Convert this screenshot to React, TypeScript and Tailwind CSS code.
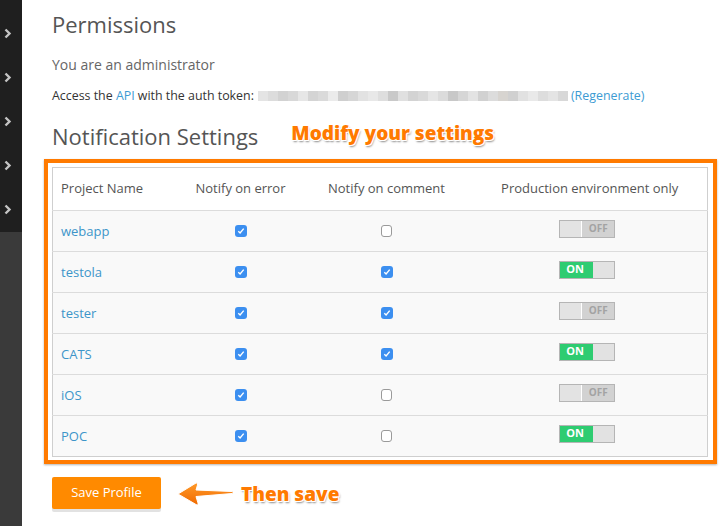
import React from "react";

const projects = [
  { name: "webapp", error: true, comment: false, prod: false },
  { name: "testola", error: true, comment: true, prod: true },
  { name: "tester", error: true, comment: true, prod: false },
  { name: "CATS", error: true, comment: true, prod: true },
  { name: "iOS", error: true, comment: false, prod: false },
  { name: "POC", error: true, comment: false, prod: true },
];

const tokenShades = [
  "#e4e4e4", "#dcdcdc", "#d2d2d2", "#d8d8d8", "#e6e6e6", "#d4d4d4", "#dadada", "#ebebeb",
  "#cfcfcf", "#d6d6d6", "#e2e2e2", "#e8e8e8", "#dedede", "#c9c9c9", "#e0e0e0", "#d3d3d3",
  "#d9d9d9", "#e5e5e5", "#dbdbdb", "#c8c8c8", "#d6d6d6", "#e3e3e3", "#d1d1d1", "#dcdcdc",
  "#d7d4d0", "#d0d0d0", "#e1e1e1", "#e9e9e9", "#dddddd", "#e4e4e4", "#d8d8d8",
];

const Chevron = () => (
  <svg width="8" height="11" viewBox="0 0 8 11">
    <path d="M1.5 1.5 L5.5 5.5 L1.5 9.5" fill="none" stroke="#c4c4c4" strokeWidth="2.4" />
  </svg>
);

const Checkbox = ({ checked }: { checked: boolean }) =>
  checked ? (
    <span className="inline-flex h-[12px] w-[12px] items-center justify-center rounded-[3px] bg-[#3c8ff0]">
      <svg width="8" height="8" viewBox="0 0 8 8">
        <path d="M1.3 4.2 L3.1 6 L6.7 1.6" fill="none" stroke="#fff" strokeWidth="1.4" />
      </svg>
    </span>
  ) : (
    <span className="inline-block h-[12px] w-[11px] rounded-[3px] border border-[#9a9a9a] bg-white" />
  );

const Toggle = ({ on }: { on: boolean }) =>
  on ? (
    <div className="flex h-[18px] w-[56px] border border-[#b5b5b5]">
      <div className="flex w-[33px] items-center bg-[#2ecc71] pl-[6px] text-[11px] font-bold text-white">ON</div>
      <div className="flex-1 bg-[#e2e2e2]" />
    </div>
  ) : (
    <div className="flex h-[18px] w-[56px] border border-[#b5b5b5] bg-[#d2d2d2]">
      <div className="w-[22px] border-r border-white bg-[#e3e3e3]" />
      <div className="flex flex-1 items-center justify-center text-[10px] font-bold text-[#a3a3a3]">OFF</div>
    </div>
  );

const Arrow = () => (
  <svg width="58" height="26" viewBox="0 0 58 26">
    <defs>
      <linearGradient id="ag" x1="0" y1="0" x2="0" y2="1">
        <stop offset="0" stopColor="#ff9a2a" />
        <stop offset="1" stopColor="#f06a00" />
      </linearGradient>
    </defs>
    <path
      d="M1 13 L19 2 Q21 1 20.5 4 L19 9 L55 10.5 Q57 11.5 55 12.5 L19 15.5 L21 22 Q21.5 25 19 23.5 Z"
      fill="url(#ag)"
      stroke="#fff"
      strokeWidth="1"
      strokeLinejoin="round"
    />
  </svg>
);

const annot =
  "font-['Open_Sans',sans-serif] font-extrabold text-[#ff7a00] [text-shadow:-1px_-1px_0_#fff,1px_-1px_0_#fff,-1px_1px_0_#fff,1px_1px_0_#fff,1px_2px_2px_rgba(0,0,0,0.45)]";

export default function App() {
  return (
    <div className="flex h-[526px] w-[725px] overflow-hidden bg-white font-['Open_Sans',sans-serif]">
      <div className="flex w-[22px] flex-col bg-[#3a3a3a]">
        <div className="flex flex-col bg-[#1f1f1f] pt-[11px] pb-[1px]">
          {[0, 1, 2, 3, 4].map((i) => (
            <div key={i} className="flex h-[44px] items-center pl-[4px]">
              <Chevron />
            </div>
          ))}
        </div>
      </div>

      <div className="flex flex-col pl-[30px]">
        <h1 className="mt-[9px] text-[22px] leading-[30px] text-[#555]">Permissions</h1>
        <p className="mt-[16px] text-[14px] leading-[20px] text-[#666]">You are an administrator</p>
        <div className="mt-[13px] flex items-center text-[12.4px] leading-[16px] text-[#333]">
          <span>
            Access the <span className="text-[#3d9bd3]">API</span> with the auth token:
          </span>
          <div className="ml-[4px] flex h-[10px]">
            {tokenShades.map((c, i) => (
              <div key={i} className="h-full w-[10px]" style={{ background: c }} />
            ))}
          </div>
          <span className="ml-[3px] text-[#3d9bd3]">(Regenerate)</span>
        </div>

        <div className="mt-[17px] flex items-center">
          <h2 className="text-[22px] leading-[30px] text-[#555]">Notification Settings</h2>
          <span className={`ml-[33px] -mt-[6px] text-[19px] leading-[24px] ${annot}`}>Modify your settings</span>
        </div>

        <div className="-ml-[8px] mt-[8px] w-[673px] border-4 border-[#ff7a00] pt-[4px] pr-[6px] pb-[3px] pl-[4px] shadow-[0_1px_2px_rgba(0,0,0,0.3)]">
          <table className="w-[655px] table-fixed border-collapse border border-[#cfcfcf] text-[13px] text-[#555]">
            <colgroup>
              <col className="w-[128px]" />
              <col className="w-[120px]" />
              <col className="w-[172px]" />
              <col className="w-[235px]" />
            </colgroup>
            <thead>
              <tr className="h-[43px] bg-white">
                <th className="pl-[8px] text-left font-normal">Project Name</th>
                <th className="text-center font-normal">Notify on error</th>
                <th className="text-center font-normal">Notify on comment</th>
                <th className="text-center font-normal">Production environment only</th>
              </tr>
            </thead>
            <tbody>
              {projects.map((p) => (
                <tr key={p.name} className="h-[41px] border-t border-[#dcdcdc] bg-[#f9f9f9]">
                  <td className="pl-[8px] pt-[2px] text-[#3d95c9]">{p.name}</td>
                  <td className="text-center">
                    <div className="flex justify-center">
                      <Checkbox checked={p.error} />
                    </div>
                  </td>
                  <td className="text-center">
                    <div className="flex justify-center">
                      <Checkbox checked={p.comment} />
                    </div>
                  </td>
                  <td>
                    <div className="flex justify-center pb-[5px] pr-[5px]">
                      <Toggle on={p.prod} />
                    </div>
                  </td>
                </tr>
              ))}
            </tbody>
          </table>
        </div>

        <div className="mt-[13px] flex items-center">
          <button className="h-[32px] w-[109px] rounded-[2px] bg-[#ff8a00] text-[13px] text-white shadow-[0_3px_0_#e2e2e2]">
            Save Profile
          </button>
          <div className="ml-[16px] mt-[2px]">
            <Arrow />
          </div>
          <span className={`ml-[6px] mt-[1px] text-[19px] leading-[24px] ${annot}`}>Then save</span>
        </div>
      </div>
    </div>
  );
}
